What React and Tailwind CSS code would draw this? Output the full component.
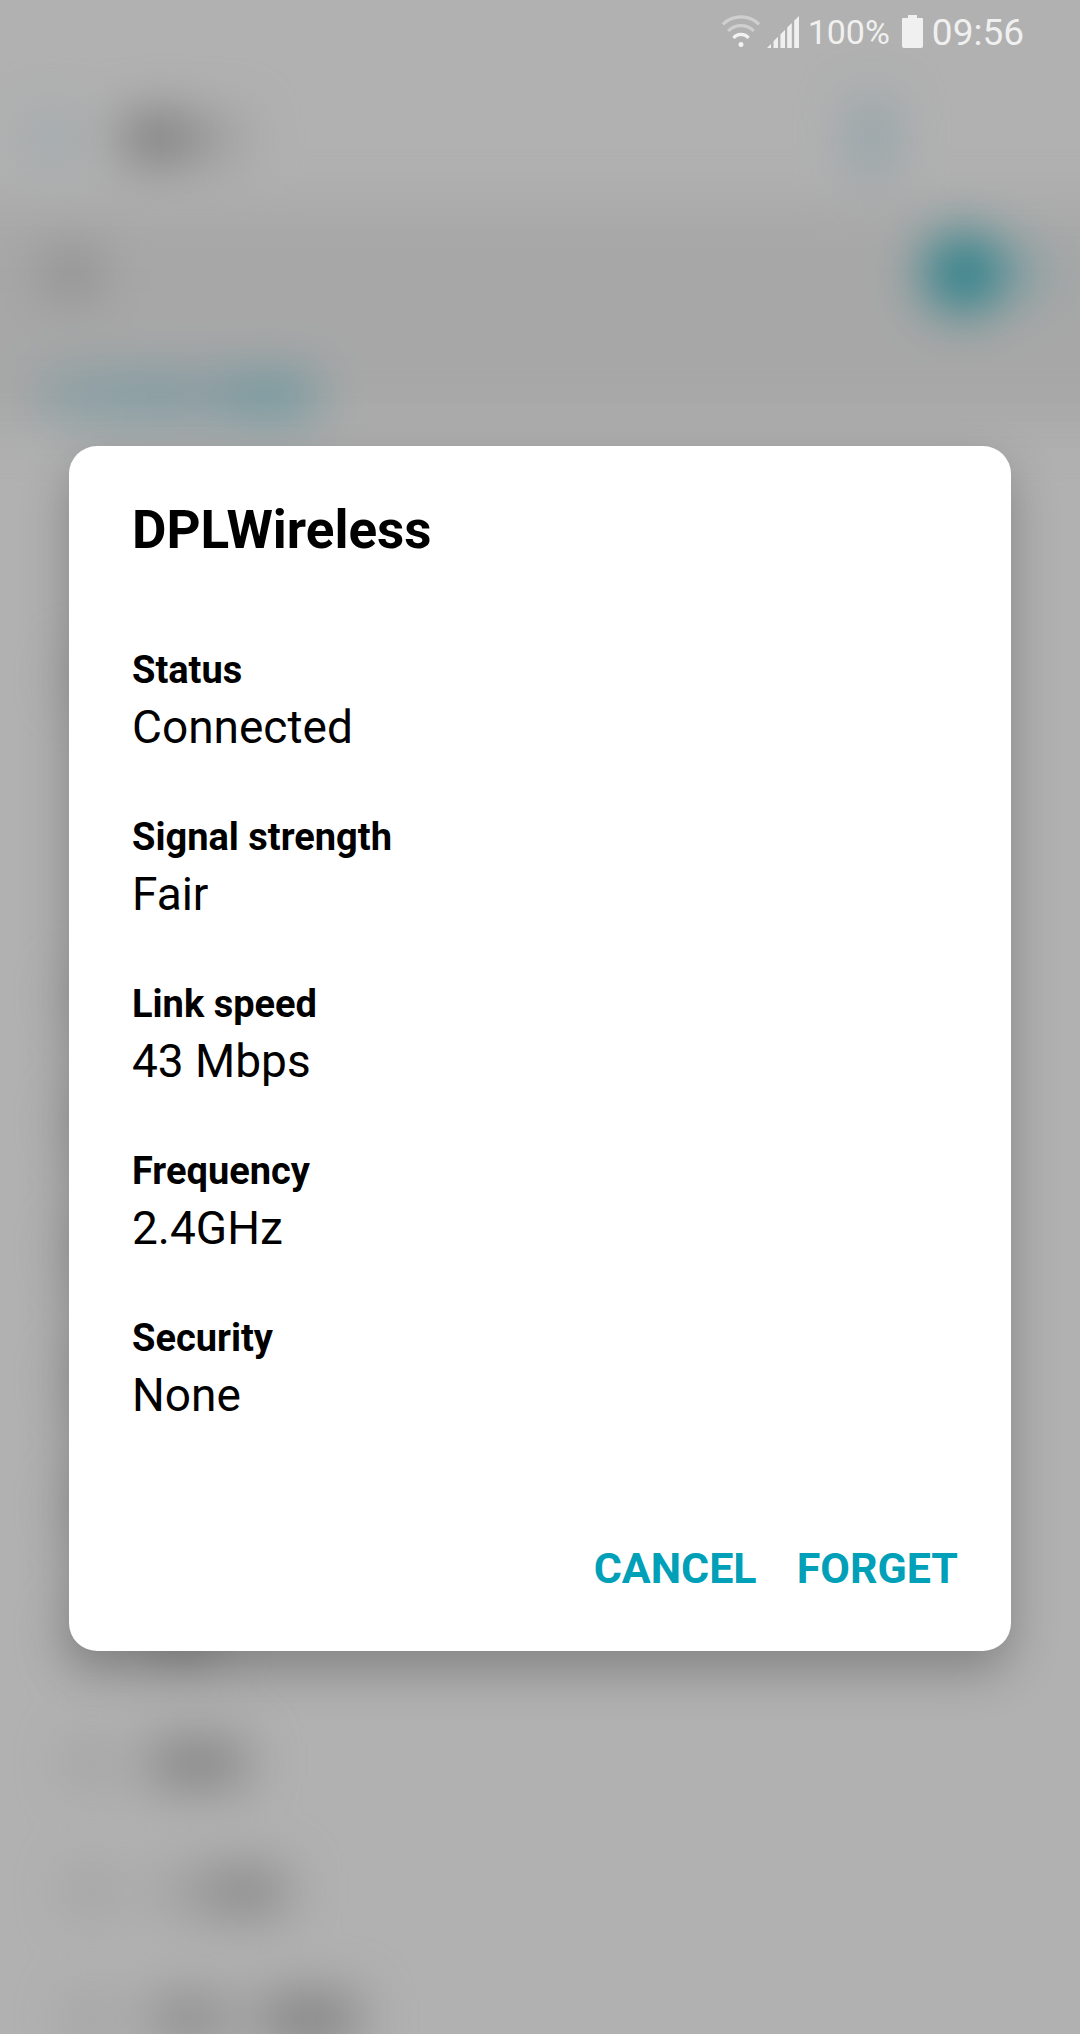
const details = [
  ["Status", "Connected"],
  ["Signal strength", "Fair"],
  ["Link speed", "43 Mbps"],
  ["Frequency", "2.4GHz"],
  ["Security", "None"],
];

function WifiIcon() {
  return (
    <svg className="h-8 w-10 shrink-0" viewBox="0 0 40 32" fill="none" strokeWidth="3.2" aria-hidden="true">
      <path d="M1.8 9.4C12 -0.6 28 -0.6 38.2 9.4" stroke="#cfcfcf" />
      <path d="M7.2 16C14.2 8.8 25.8 8.8 32.8 16" stroke="#cfcfcf" />
      <path d="M12.4 23C16.4 18.2 23.6 18.2 27.6 23" stroke="#f2f2f2" />
      <circle cx="20" cy="29.6" r="2.5" fill="#f2f2f2" />
    </svg>
  );
}

function SignalIcon() {
  return (
    <svg className="h-8 w-8 shrink-0" viewBox="0 0 32 32" fill="#f0f0f0" aria-hidden="true">
      <path d="M0 32L4 28V32ZM6.5 25.2L11 20.8V32H6.5ZM13.4 18.4L18 13.8V32H13.4ZM20.2 11.6L24.8 7V32H20.2ZM27.2 4.8L32 0V32H27.2Z" />
    </svg>
  );
}

function BatteryIcon() {
  return (
    <svg className="h-[33px] w-[21px] shrink-0" viewBox="0 0 21 33" fill="#f0f0f0" aria-hidden="true">
      <path d="M6 0H15V3H20Q21 3 21 4V31Q21 33 19 33H2Q0 33 0 31V4Q0 3 1 3H6Z" />
    </svg>
  );
}

function StatusBar() {
  return (
    <header className="relative flex h-16 items-start justify-end pt-[15px] pr-14 leading-[34px] text-[#f0f0f0]">
      <WifiIcon />
      <span className="ml-[6px] flex pt-px">
        <SignalIcon />
      </span>
      <span className="ml-[9px] text-[34px]">100%</span>
      <span className="ml-3">
        <BatteryIcon />
      </span>
      <time className="ml-[9px] pt-px text-[37px]">09:56</time>
    </header>
  );
}

function NetworkRow({ children }) {
  return (
    <div className="flex h-32 items-center pl-[70px]">
      <span className="mr-10 h-10 w-10 rounded-full bg-[#999999]" />
      {children}
    </div>
  );
}

function BlurredSettings() {
  return (
    <div className="absolute inset-0 overflow-hidden" aria-hidden="true">
      <div className="-mx-20 blur-[26px]">
        <div className="flex h-[205px] items-center px-20 pt-[70px]">
          <span className="ml-7 h-12 w-12 rounded-full bg-[#9ba9ad]" />
          <span className="ml-12 h-11 w-16 bg-[#757575]" />
          <span className="h-10 w-14 bg-[#989898]" />
          <span className="mr-[190px] ml-auto h-[72px] w-9 bg-[#8ca1a8]" />
        </div>
        <div className="h-[220px] bg-[#a7a7a7] px-20">
          <div className="flex h-[135px] items-center">
            <span className="ml-11 h-11 w-14 bg-[#8d8d8d]" />
            <span className="ml-auto h-20 w-20 rounded-full bg-[#288089]" />
            <span className="mr-8 h-9 w-11 bg-[#82a0a4]" />
          </div>
          <div className="flex items-center pt-9">
            <span className="ml-11 h-10 w-20 bg-[#7f9ba1]" />
            <span className="h-10 w-14 bg-[#76989f]" />
            <span className="h-10 w-12 bg-[#8097a0]" />
            <span className="h-10 w-[88px] bg-[#66949c]" />
          </div>
        </div>
        <div className="px-20 pt-[188px]">
          <NetworkRow />
          <div className="pt-[190px]">
            <NetworkRow />
            <NetworkRow />
            <NetworkRow />
            <NetworkRow />
            <NetworkRow />
            <NetworkRow>
              <span className="h-10 w-16 bg-[#888888]" />
            </NetworkRow>
            <NetworkRow>
              <span className="h-11 w-24 bg-[#808080]" />
            </NetworkRow>
            <NetworkRow>
              <span className="h-9 w-14 bg-[#9e9e9e]" />
              <span className="h-11 w-20 bg-[#868686]" />
            </NetworkRow>
            <NetworkRow>
              <span className="h-11 w-20 bg-[#8a8a8a]" />
              <span className="ml-8 h-12 w-24 bg-[#808080]" />
            </NetworkRow>
          </div>
        </div>
      </div>
    </div>
  );
}

export default function App() {
  return (
    <div className="relative min-h-screen overflow-hidden bg-[#b1b1b1] font-[Roboto,sans-serif]">
      <BlurredSettings />
      <StatusBar />
      <main className="relative px-[69px] pt-[382px] pb-20">
        <section
          role="dialog"
          aria-labelledby="network-name"
          className="rounded-[28px] bg-white px-[63px] pt-[52px] pb-[53px] text-black shadow-[0_20px_48px_rgba(0,0,0,0.25)]"
        >
          <h1 id="network-name" className="text-[53px] leading-[64px] font-bold">
            DPLWireless
          </h1>
          <dl className="mt-[82px] flex flex-col gap-[53px]">
            {details.map(([label, value]) => (
              <div key={label}>
                <dt className="text-[38px] leading-[52px] font-bold">{label}</dt>
                <dd className="text-[46px] leading-[62px]">{value}</dd>
              </div>
            ))}
          </dl>
          <div className="-mr-2.5 mt-28 flex justify-end gap-10 text-[43px] leading-[60px] text-[#00a0b8]">
            <button type="button" className="font-bold">CANCEL</button>
            <button type="button" className="font-bold">FORGET</button>
          </div>
        </section>
      </main>
    </div>
  );
}
